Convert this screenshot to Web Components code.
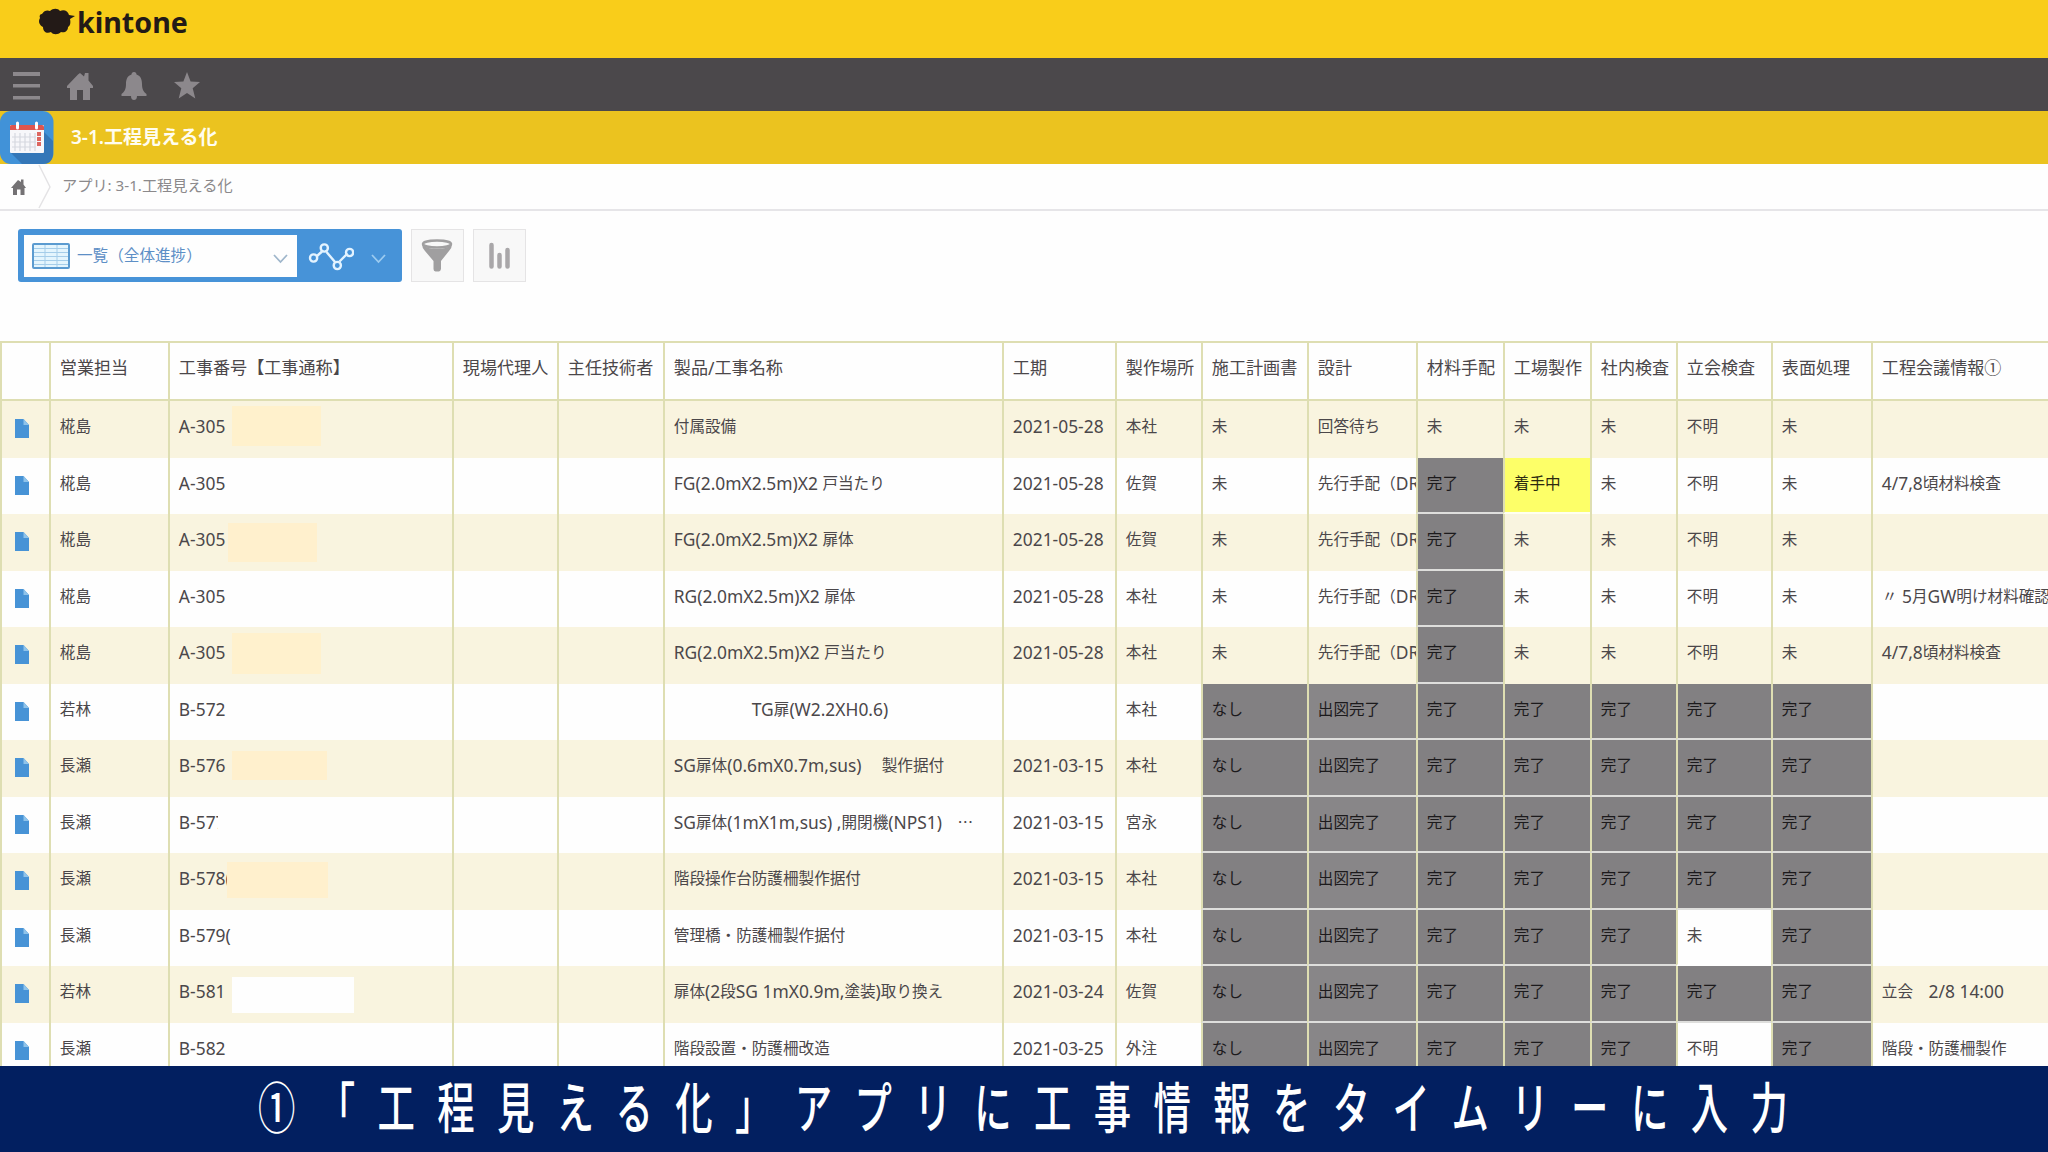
<!DOCTYPE html>
<html lang="ja">
<head>
<meta charset="utf-8">
<title>3-1.工程見える化</title>
<style>
    html, body {
        margin: 0;
        width: 2048px;
        height: 1152px;
        overflow: hidden;
        background: #fefefe;
    }

    body {
        font-family: "Noto Sans", "Noto Sans CJK JP", sans-serif;
        --line-color: #dedeb2;
        --stripe-color: #f9f4df;
        --accent-color: #4793d8;
    }
</style>
</head>
<body>
<process-app></process-app>

<script>
    // Wrap the japanese parts of a text, they are set a little smaller than the latin ones.
    const wrapJapanese = (text) => text.replace(/[^\x20-\x7e]+/g, (run) => `<span class="ja">${run}</span>`)

    /**
     * The yellow bar with the product logo.
     */
    class BrandBar extends HTMLElement {
        constructor() {
            super()
            this.attachShadow({ mode: 'open' })
            this.shadowRoot.innerHTML = `
            <style>
                :host {
                    display: flex;
                    box-sizing: border-box;
                    height: 58px;
                    padding-left: 38px;
                    background: #f9cd1a;
                    color: #231a17;
                }

                svg {
                    margin-top: 8px;
                }

                .name {
                    margin-left: 1px;
                    font-size: 28.6px;
                    font-weight: 700;
                    line-height: 43px;
                }
            </style>
            <svg width="38" height="28" viewBox="0 0 38 28">
                <path fill="#231a17" d="M4 6 C6 2 10 2 12 3 C15 0 20 0 22 3 C26 1 30 3 31 7 L37 8 L32 11 C33 15 32 18 30 19 C30 23 27 25 23 24 C20 27 15 27 13 24 C9 26 5 24 5 19 C1 17 0 13 2 10 C1 8 2 6 4 6Z"/>
            </svg>
            <div class="name">kintone</div>
            `
        }
    }

    /**
     * The dark bar with the global navigation icons.
     */
    class NavBar extends HTMLElement {
        constructor() {
            super()
            this.attachShadow({ mode: 'open' })
            this.shadowRoot.innerHTML = `
            <style>
                :host {
                    display: flex;
                    align-items: center;
                    box-sizing: border-box;
                    height: 53px;
                    gap: 27.3px;
                    padding: 2px 0 0 13px;
                    background: #4b484b;
                }

                svg {
                    fill: #8c888c;
                }
            </style>
            <svg width="27" height="28" viewBox="0 0 27 28"><path d="M0 0h27v4H0zM0 12h27v3.6H0zM0 24h27v3.6H0z"/></svg>
            <svg width="26" height="28" viewBox="0 0 26 28"><path d="M0 14 L11 2.500 L13 1 L17 4.500 L18 1 H21.500 V8.500 L26 14 V16 H23 V28 H16 V18 H10 V28 H3 V16 H0Z"/></svg>
            <svg width="26" height="28" viewBox="0 0 26 28"><path d="M13 0 C15 0 15.500 1.500 15.500 2.500 C20 4 21 8 21 12 C21 18 23 20 25.500 22 V24 H16 C16 27 14.500 28 13 28 C11.500 28 10 27 10 24 H0.500 V22 C3 20 5 18 5 12 C5 8 6 4 10.500 2.500 C10.500 1.500 11 0 13 0Z"/></svg>
            <svg width="26" height="28" viewBox="0 0 26 28"><path d="M13 0 L16.600 9.500 L26 10 L18.700 16.300 L21.300 26.500 L13 21 L4.700 26.500 L7.300 16.300 L0 10 L9.400 9.500Z"/></svg>
            `
        }
    }

    /**
     * The application icon and its title.
     */
    class AppTitle extends HTMLElement {
        constructor() {
            super()
            this.attachShadow({ mode: 'open' })
            this.shadowRoot.innerHTML = `
            <style>
                :host {
                    display: flex;
                    height: 53px;
                    background: #ebc31f;
                    color: #fffdf0;
                }

                .title {
                    margin-left: 17px;
                    font-size: 19px;
                    font-weight: 600;
                    line-height: 52px;
                }
            </style>
            <svg width="54" height="53" viewBox="0 0 54 53">
                <rect width="53.500" height="53" rx="11" fill="#4192d8"/>
                <path d="M10 41 L43 20 L53 30 V44 Q52 53 43 53 H22Z" fill="#3477b8"/>
                <rect x="10" y="14" width="34" height="28" rx="1" fill="#f7f7fa"/>
                <path d="M10 19 V15 Q10 14 12 14 H42 Q44 14 44 16 V19Z" fill="#dd5650"/>
                <path d="M15 22V40M20 22V40M25 22V40M30 22V40M35 22V40M12 26H36M12 31H36M12 36H36" stroke="#d5d7df" stroke-width="1.200"/>
                <path d="M39 21V35" stroke="#dd6660" stroke-width="4" stroke-dasharray="4 1"/>
                <path d="M17.500 12V17M36.500 12V17" stroke="#fff" stroke-width="3" stroke-linecap="round"/>
            </svg>
            <div class="title"><slot></slot></div>
            `
        }
    }

    /**
     * The breadcrumb under the title.
     */
    class BreadCrumb extends HTMLElement {
        constructor() {
            super()
            this.attachShadow({ mode: 'open' })
            this.shadowRoot.innerHTML = `
            <style>
                :host {
                    display: flex;
                    box-sizing: border-box;
                    height: 47px;
                    border-bottom: 2px solid #e6e5e8;
                    background: #fefefe;
                    color: #8b898b;
                }

                .path {
                    margin-left: 10px;
                    font-size: 15.2px;
                    line-height: 42px;
                }
            </style>
            <svg width="52" height="45" viewBox="0 0 52 45">
                <path d="M11 24 L18 16 L21 18 V15.500 H23.500 V20.500 L26 24 H24.500 V31 H20.500 V25.500 H17 V31 H13 V24Z" fill="#747274"/>
                <path d="M39 1 L50 23 L39 44" fill="none" stroke="#e4e3e5" stroke-width="1.500"/>
            </svg>
            <div class="path"><slot></slot></div>
            `
        }
    }

    /**
     * The view selector, the graph menu, the filter and the chart buttons.
     */
    class ViewToolbar extends HTMLElement {
        constructor() {
            super()
            this.attachShadow({ mode: 'open' })
            this.shadowRoot.innerHTML = `
            <style>
                :host {
                    display: flex;
                    align-items: flex-start;
                    box-sizing: border-box;
                    height: 130px;
                    padding: 18px 0 0 18px;
                }

                .selector {
                    display: flex;
                    align-items: center;
                    box-sizing: border-box;
                    width: 384px;
                    height: 53px;
                    padding-left: 6px;
                    border-radius: 3px;
                    background: var(--accent-color);
                }

                .view {
                    display: flex;
                    align-items: center;
                    box-sizing: border-box;
                    width: 273px;
                    height: 42px;
                    padding: 0 9px 0 8px;
                    background: #fefefe;
                    color: #5d8fc6;
                }

                .name {
                    flex-grow: 1;
                    margin: 0 0 3px 7px;
                    font-size: 15.6px;
                    white-space: nowrap;
                }

                .arrow {
                    fill: none;
                    stroke-width: 1.8;
                    margin-top: 5px;
                }

                .graph {
                    margin: 0 17px 0 11px;
                }

                .button {
                    box-sizing: border-box;
                    width: 53px;
                    height: 53px;
                    margin-left: 9px;
                    border: 1.500px solid #e5e4e5;
                    background: #f8f8f8;
                }
            </style>
            <div class="selector">
                <div class="view">
                    <svg width="38" height="26" viewBox="0 0 38 26">
                        <rect x="1" y="1" width="36" height="24" rx="1" fill="#e4f5fd" stroke="#5b9bd0" stroke-width="2"/>
                        <path d="M2 5.500H36M2 9.500H36M2 13.500H36M2 17.500H36M2 21.500H36M13 2V24M25 2V24" stroke="#a5cde9"/>
                    </svg>
                    <div class="name"><slot></slot></div>
                    <svg class="arrow" width="15" height="11" viewBox="0 0 15 11" stroke="#9fb6cb"><path d="M1 2 L7.500 9 L14 2"/></svg>
                </div>
                <svg class="graph" width="46" height="30" viewBox="0 0 46 30" fill="none" stroke="#e3f3ff" stroke-width="2.400">
                    <path d="M8.500 15.500 L14 10.500 M18.500 11 L27 21 M31.500 20.500 L39.500 12.500"/>
                    <circle cx="5.600" cy="17" r="3.600"/>
                    <circle cx="16.300" cy="7" r="3.600"/>
                    <circle cx="29.300" cy="24.500" r="3.600"/>
                    <circle cx="41.600" cy="11.500" r="3.600"/>
                </svg>
                <svg class="arrow" width="15" height="11" viewBox="0 0 15 11" stroke="#9ccbf0"><path d="M1 2 L7.500 9 L14 2"/></svg>
            </div>
            <div class="button">
                <svg width="50" height="50" viewBox="0 0 50 50">
                    <path d="M10 14 Q14 19 25 19 Q36 19 40 14 Q40 18 37 21 L29 31 V39 Q28.500 41 27 41.500 H23.500 Q21.500 41 21.500 39 V31 L13 21 Q10 18 10 14Z" fill="#a09fa0"/>
                    <ellipse cx="25" cy="14" rx="14" ry="3.500" fill="#f8f8f8" stroke="#a09fa0" stroke-width="2.500"/>
                </svg>
            </div>
            <div class="button">
                <svg width="50" height="50" viewBox="0 0 50 50" stroke="#a9a7a9" stroke-width="4.500" stroke-linecap="round">
                    <path d="M17.500 15V36.500M25.500 25V36.500M33.500 20V36.500"/>
                </svg>
            </div>
            `
        }
    }

    /**
     * One cell of the record list. The kind attribute gives the colour: done, plan, working or blank.
     */
    class RecordCell extends HTMLElement {
        connectedCallback() {
            this.attachShadow({ mode: 'open' })
            this.shadowRoot.innerHTML = `
            <style>
                :host {
                    display: block;
                    position: relative;
                    box-sizing: border-box;
                    overflow: hidden;
                    padding-left: 8.8px;
                    border-left: 2px solid var(--line-color);
                    font-size: 17.4px;
                    line-height: 50px;
                    color: #4b474a;
                }

                :host([kind]) {
                    color: #1c1a1c;
                    border-bottom: 2px solid #dededc;
                    background: #828082;
                }

                :host([kind="plan"]) {
                    background: #888688;
                }

                :host([kind="working"]) {
                    color: #2c2a10;
                    background: #fdff68;
                    border-bottom-color: #fffff0;
                }

                :host([kind="blank"]) {
                    color: #4b474a;
                    background: #fefefe;
                    border-bottom-color: #fefefe;
                }

                .text {
                    height: 50px;
                    white-space: pre;
                }

                .ja {
                    font-family: "Noto Sans CJK JP", sans-serif;
                    font-size: 15.6px;
                    line-height: 1;
                    vertical-align: 0.6px;
                }

                :host([head]) .ja {
                    font-size: 17.1px;
                }

                /* Note stuck over the rest of the text. */
                .note {
                    position: absolute;
                }

                svg {
                    display: block;
                    margin: 18px 0 0 4px;
                }
            </style>
            ${this.content()}
            `
        }

        content() {
            if (this.hasAttribute('icon')) {
                return `<svg width="14" height="19" viewBox="0 0 14 19">
                    <path d="M0 0H8.500L14 6V19H0Z" fill="#4793d6"/>
                    <path d="M8.500 0L14 6H8.500Z" fill="#8fc3ea"/>
                </svg>`
            }
            let html = `<div class="text">${wrapJapanese(this.getAttribute('text') || '')}</div>`
            if (this.hasAttribute('note')) {
                const [x, y, width, height, color] = this.getAttribute('note').split(' ')
                html += `<div class="note" style="left:${x}px;top:${y}px;width:${width}px;height:${height}px;background:${color}"></div>`
            }
            return html
        }
    }

    const HEADERS = ['', '営業担当', '工事番号【工事通称】', '現場代理人', '主任技術者', '製品/工事名称', '工期', '製作場所',
        '施工計画書', '設計', '材料手配', '工場製作', '社内検査', '立会検査', '表面処理', '工程会議情報①']

    const DONE = ['なし', '出図完了', '完了', '完了', '完了', '完了', '完了']

    // person, number, name, date, place, states, meeting, note over the number
    const RECORDS = [
        ['椛島', 'A-305', '付属設備', '2021-05-28', '本社', ['未', '回答待ち', '未', '未', '未', '不明', '未'], '', '62 5 89 40 #fff1cc'],
        ['椛島', 'A-305', 'FG(2.0mX2.5m)X2 戸当たり', '2021-05-28', '佐賀', ['未', '先行手配（DR', '完了', '着手中', '未', '不明', '未'], '4/7,8頃材料検査'],
        ['椛島', 'A-305', 'FG(2.0mX2.5m)X2 扉体', '2021-05-28', '佐賀', ['未', '先行手配（DR', '完了', '未', '未', '不明', '未'], '', '58 9 89 39 #fff0cd'],
        ['椛島', 'A-305', 'RG(2.0mX2.5m)X2 扉体', '2021-05-28', '本社', ['未', '先行手配（DR', '完了', '未', '未', '不明', '未'], '〃 5月GW明け材料確認'],
        ['椛島', 'A-305', 'RG(2.0mX2.5m)X2 戸当たり', '2021-05-28', '本社', ['未', '先行手配（DR', '完了', '未', '未', '不明', '未'], '4/7,8頃材料検査', '62 6 89 41 #fff1cd'],
        ['若林', 'B-572', '　　　　　TG扉(W2.2XH0.6)', '', '本社', DONE, ''],
        ['長瀬', 'B-576', 'SG扉体(0.6mX0.7m,sus)　 製作据付', '2021-03-15', '本社', DONE, '', '62 11 95 29 #fff0cd'],
        ['長瀬', 'B-577', 'SG扉体(1mX1m,sus) ,開閉機(NPS1)　…', '2021-03-15', '宮永', DONE, '', '48 8 120 38 #fefefe'],
        ['長瀬', 'B-578(', '階段操作台防護柵製作据付', '2021-03-15', '本社', DONE, '', '57 9 101 36 #fff0cd'],
        ['長瀬', 'B-579(', '管理橋・防護柵製作据付', '2021-03-15', '本社', ['なし', '出図完了', '完了', '完了', '完了', '未', '完了'], ''],
        ['若林', 'B-581', '扉体(2段SG 1mX0.9m,塗装)取り換え', '2021-03-24', '佐賀', DONE, '立会　2/8 14:00', '62 11 122 36 #fefefe'],
        ['長瀬', 'B-582', '階段設置・防護柵改造', '2021-03-25', '外注', ['なし', '出図完了', '完了', '完了', '完了', '不明', '完了'], '階段・防護柵製作']
    ]

    /**
     * The record list.
     */
    class RecordTable extends HTMLElement {
        constructor() {
            super()
            this.attachShadow({ mode: 'open' })
            this.shadowRoot.innerHTML = `
            <style>
                :host {
                    display: block;
                }

                .row {
                    display: grid;
                    grid-template-columns: 49px 119px 284px 105px 106px 339px 113px 86px 106px 109px 87px 87px 86px 95px 100px 177px;
                    height: 56.5px;
                    background: #fefefe;
                }

                .row.head {
                    box-sizing: border-box;
                    height: 60px;
                    border-top: 2px solid var(--line-color);
                    border-bottom: 2px solid var(--line-color);
                }

                .row.stripe {
                    background: var(--stripe-color);
                }
            </style>
            <div class="row head">${HEADERS.map((text) => `<record-cell head text="${text}"></record-cell>`).join('')}</div>
            ${RECORDS.map((record, index) => this.row(record, index)).join('')}
            `
        }

        row([person, number, name, date, place, states, meeting, note], index) {
            const cell = (text, extra = '') => `<record-cell text="${text}" ${extra}></record-cell>`
            return `<div class="row ${index % 2 ? '' : 'stripe'}">
                ${cell('', 'icon')}${cell(person)}${cell(number, note ? `note="${note}"` : '')}${cell('')}${cell('')}
                ${cell(name)}${cell(date)}${cell(place)}${states.map((state) => cell(state, this.kind(state, index))).join('')}${cell(meeting)}
            </div>`
        }

        kind(state, index) {
            if (state === '完了' || state === 'なし') return 'kind="done"'
            if (state === '出図完了') return 'kind="plan"'
            if (state === '着手中') return 'kind="working"'
            return index > 5 ? 'kind="blank"' : ''
        }
    }

    /**
     * The caption at the bottom of the screen.
     */
    class CaptionBar extends HTMLElement {
        constructor() {
            super()
            this.attachShadow({ mode: 'open' })
            this.shadowRoot.innerHTML = `
            <style>
                :host {
                    display: block;
                    box-sizing: border-box;
                    flex: none;
                    height: 86px;
                    padding-left: 258px;
                    overflow: hidden;
                    background: #021f60;
                    color: #fff;
                }

                .text {
                    width: 2400px;
                    font-family: "Noto Sans CJK JP", sans-serif;
                    font-size: 55px;
                    font-weight: 500;
                    line-height: 77px;
                    letter-spacing: 32.9px;
                    white-space: nowrap;
                    transform: scaleX(0.68);
                    transform-origin: left;
                }
            </style>
            <div class="text"><slot></slot></div>
            `
        }
    }

    /**
     * The whole page.
     */
    class ProcessApp extends HTMLElement {
        constructor() {
            super()
            this.attachShadow({ mode: 'open' })
            this.shadowRoot.innerHTML = `
            <style>
                :host {
                    display: flex;
                    flex-direction: column;
                    width: 2048px;
                    height: 1152px;
                    overflow: hidden;
                }

                .content {
                    flex: 1;
                    min-height: 0;
                    overflow: hidden;
                }
            </style>
            <div class="content">
                <brand-bar></brand-bar>
                <nav-bar></nav-bar>
                <app-title>3-1.工程見える化</app-title>
                <bread-crumb>アプリ: 3-1.工程見える化</bread-crumb>
                <view-toolbar>一覧（全体進捗）</view-toolbar>
                <record-table></record-table>
            </div>
            <caption-bar>①「工程見える化」アプリに工事情報をタイムリーに入力</caption-bar>
            `
        }
    }

    customElements.define('brand-bar', BrandBar)
    customElements.define('nav-bar', NavBar)
    customElements.define('app-title', AppTitle)
    customElements.define('bread-crumb', BreadCrumb)
    customElements.define('view-toolbar', ViewToolbar)
    customElements.define('record-cell', RecordCell)
    customElements.define('record-table', RecordTable)
    customElements.define('caption-bar', CaptionBar)
    customElements.define('process-app', ProcessApp)
</script>
</body>
</html>
